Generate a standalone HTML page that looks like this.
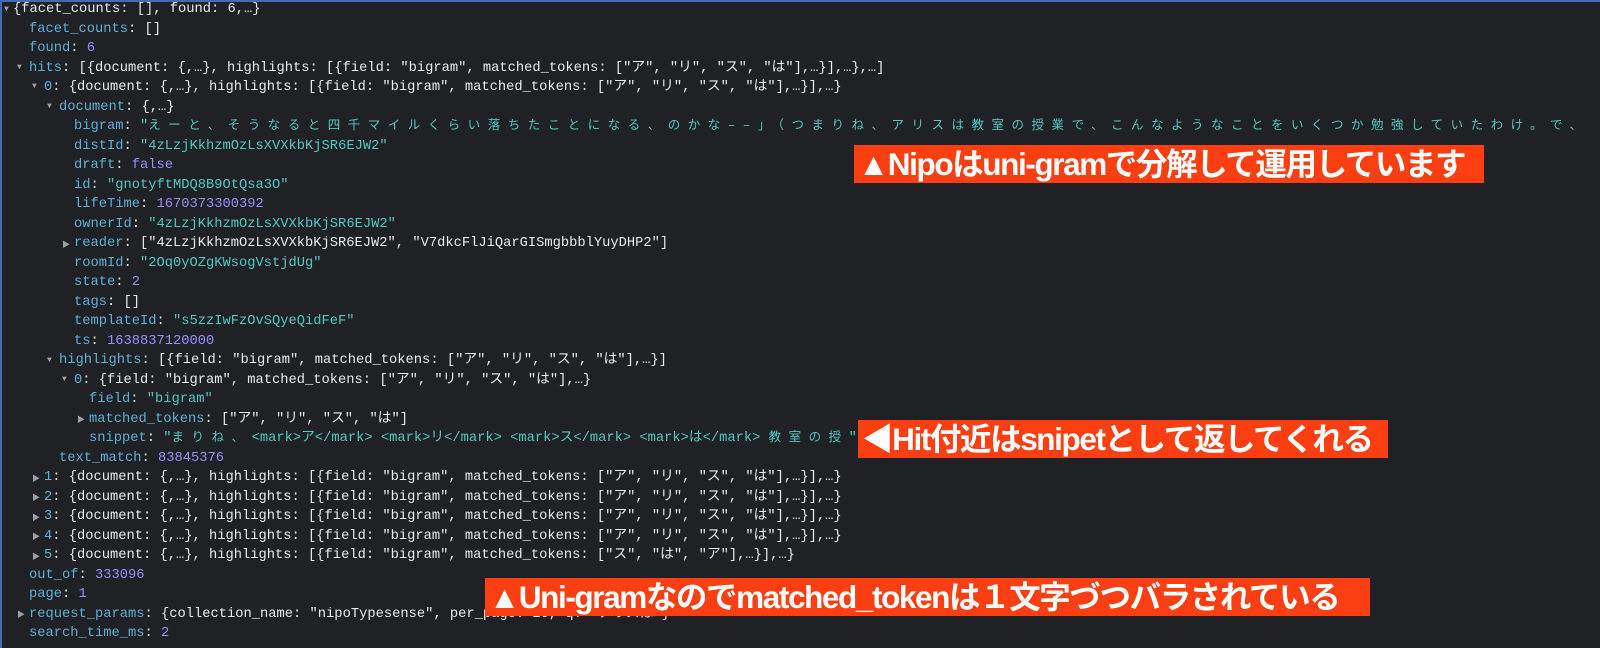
<!DOCTYPE html>
<html><head><meta charset="utf-8"><style>
html,body{margin:0;padding:0;}
body{width:1600px;height:648px;overflow:hidden;background:#202124;position:relative;font-family:"Liberation Mono","Noto Sans CJK JP",monospace;font-size:13.75px;color:#e8eaed;border-left:2px solid #3b6fb0;box-sizing:border-box;}
.top{position:absolute;left:0;top:0;width:1600px;height:2px;background:#3b6fb0;}
.l{position:absolute;white-space:pre;height:19.5px;line-height:19.5px;}
.k{color:#5db0d7}.s{color:#4fc9c4}.n{color:#9d8cff}
.t{position:absolute;color:#9aa0a6;font-size:8px;}
.jp{letter-spacing:7.5px;font-size:12.5px;}
.b{position:absolute;background:#fc3f12;color:#fff;font-family:"Liberation Sans","Noto Sans CJK JP",sans-serif;font-weight:bold;font-size:31.5px;line-height:38px;height:38px;white-space:nowrap;padding:0 4px;letter-spacing:-1.4px;overflow:hidden;box-sizing:border-box;}
</style></head><body><div class="top"></div>
<div class="t" style="left:2px;top:5px">▼</div><div class="l" style="left:11px;top:0px">{facet_counts: [], found: 6,…}</div>
<div class="l" style="left:27px;top:19.5px"><span class="k">facet_counts</span>: []</div>
<div class="l" style="left:27px;top:39px"><span class="k">found</span>: <span class="n">6</span></div>
<div class="t" style="left:15px;top:63px">▼</div><div class="l" style="left:27px;top:58.5px"><span class="k">hits</span>: [{document: {,…}, highlights: [{field: "bigram", matched_tokens: ["ア", "リ", "ス", "は"],…}],…},…]</div>
<div class="t" style="left:30px;top:82px">▼</div><div class="l" style="left:42px;top:78px"><span class="k">0</span>: {document: {,…}, highlights: [{field: "bigram", matched_tokens: ["ア", "リ", "ス", "は"],…}],…}</div>
<div class="t" style="left:45px;top:102px">▼</div><div class="l" style="left:57px;top:97.5px"><span class="k">document</span>: {,…}</div>
<div class="l" style="left:72px;top:117px"><span class="k">bigram</span>: <span class="s">"<span class="jp">えーと、そうなると四千マイルくらい落ちたことになる、のかな––」（つまりね、アリスは教室の授業で、こんなようなことをいくつか勉強していたわけ。で、</span></span></div>
<div class="l" style="left:72px;top:136.5px"><span class="k">distId</span>: <span class="s">"4zLzjKkhzmOzLsXVXkbKjSR6EJW2"</span></div>
<div class="l" style="left:72px;top:156px"><span class="k">draft</span>: <span class="n">false</span></div>
<div class="l" style="left:72px;top:175.5px"><span class="k">id</span>: <span class="s">"gnotyftMDQ8B9OtQsa3O"</span></div>
<div class="l" style="left:72px;top:195px"><span class="k">lifeTime</span>: <span class="n">1670373300392</span></div>
<div class="l" style="left:72px;top:214.5px"><span class="k">ownerId</span>: <span class="s">"4zLzjKkhzmOzLsXVXkbKjSR6EJW2"</span></div>
<div class="t" style="left:60px;top:239px">▶</div><div class="l" style="left:72px;top:234px"><span class="k">reader</span>: ["4zLzjKkhzmOzLsXVXkbKjSR6EJW2", "V7dkcFlJiQarGISmgbbblYuyDHP2"]</div>
<div class="l" style="left:72px;top:253.5px"><span class="k">roomId</span>: <span class="s">"2Oq0yOZgKWsogVstjdUg"</span></div>
<div class="l" style="left:72px;top:273px"><span class="k">state</span>: <span class="n">2</span></div>
<div class="l" style="left:72px;top:292.5px"><span class="k">tags</span>: []</div>
<div class="l" style="left:72px;top:312px"><span class="k">templateId</span>: <span class="s">"s5zzIwFzOvSQyeQidFeF"</span></div>
<div class="l" style="left:72px;top:331.5px"><span class="k">ts</span>: <span class="n">1638837120000</span></div>
<div class="t" style="left:45px;top:356px">▼</div><div class="l" style="left:57px;top:351px"><span class="k">highlights</span>: [{field: "bigram", matched_tokens: ["ア", "リ", "ス", "は"],…}]</div>
<div class="t" style="left:60px;top:375px">▼</div><div class="l" style="left:72px;top:370.5px"><span class="k">0</span>: {field: "bigram", matched_tokens: ["ア", "リ", "ス", "は"],…}</div>
<div class="l" style="left:87px;top:390px"><span class="k">field</span>: <span class="s">"bigram"</span></div>
<div class="t" style="left:75px;top:414px">▶</div><div class="l" style="left:87px;top:409.5px"><span class="k">matched_tokens</span>: ["ア", "リ", "ス", "は"]</div>
<div class="l" style="left:87px;top:429px"><span class="k">snippet</span>: <span class="s">"<span class="jp">まりね、</span>&lt;mark&gt;ア&lt;/mark&gt; &lt;mark&gt;リ&lt;/mark&gt; &lt;mark&gt;ス&lt;/mark&gt; &lt;mark&gt;は&lt;/mark&gt; <span class="jp">教室の授</span>"</span></div>
<div class="l" style="left:57px;top:448.5px"><span class="k">text_match</span>: <span class="n">83845376</span></div>
<div class="t" style="left:30px;top:473px">▶</div><div class="l" style="left:42px;top:468px"><span class="k">1</span>: {document: {,…}, highlights: [{field: "bigram", matched_tokens: ["ア", "リ", "ス", "は"],…}],…}</div>
<div class="t" style="left:30px;top:492px">▶</div><div class="l" style="left:42px;top:487.5px"><span class="k">2</span>: {document: {,…}, highlights: [{field: "bigram", matched_tokens: ["ア", "リ", "ス", "は"],…}],…}</div>
<div class="t" style="left:30px;top:512px">▶</div><div class="l" style="left:42px;top:507px"><span class="k">3</span>: {document: {,…}, highlights: [{field: "bigram", matched_tokens: ["ア", "リ", "ス", "は"],…}],…}</div>
<div class="t" style="left:30px;top:531px">▶</div><div class="l" style="left:42px;top:526.5px"><span class="k">4</span>: {document: {,…}, highlights: [{field: "bigram", matched_tokens: ["ア", "リ", "ス", "は"],…}],…}</div>
<div class="t" style="left:30px;top:551px">▶</div><div class="l" style="left:42px;top:546px"><span class="k">5</span>: {document: {,…}, highlights: [{field: "bigram", matched_tokens: ["ス", "は", "ア"],…}],…}</div>
<div class="l" style="left:27px;top:565.5px"><span class="k">out_of</span>: <span class="n">333096</span></div>
<div class="l" style="left:27px;top:585px"><span class="k">page</span>: <span class="n">1</span></div>
<div class="t" style="left:15px;top:609px">▶</div><div class="l" style="left:27px;top:604.5px"><span class="k">request_params</span>: {collection_name: "nipoTypesense", per_page: 20, q: "アリスは"}</div>
<div class="l" style="left:27px;top:624px"><span class="k">search_time_ms</span>: <span class="n">2</span></div>
<div class="b" style="left:852px;top:145px;width:630px;">▲Nipoはuni-gramで分解して運用しています</div>
<div class="b" style="left:856px;top:420px;width:530px;">◀Hit付近はsnipetとして返してくれる</div>
<div class="b" style="left:483px;top:578px;width:885px;">▲Uni-gramなのでmatched_tokenは１文字づつバラされている</div>
</body></html>
